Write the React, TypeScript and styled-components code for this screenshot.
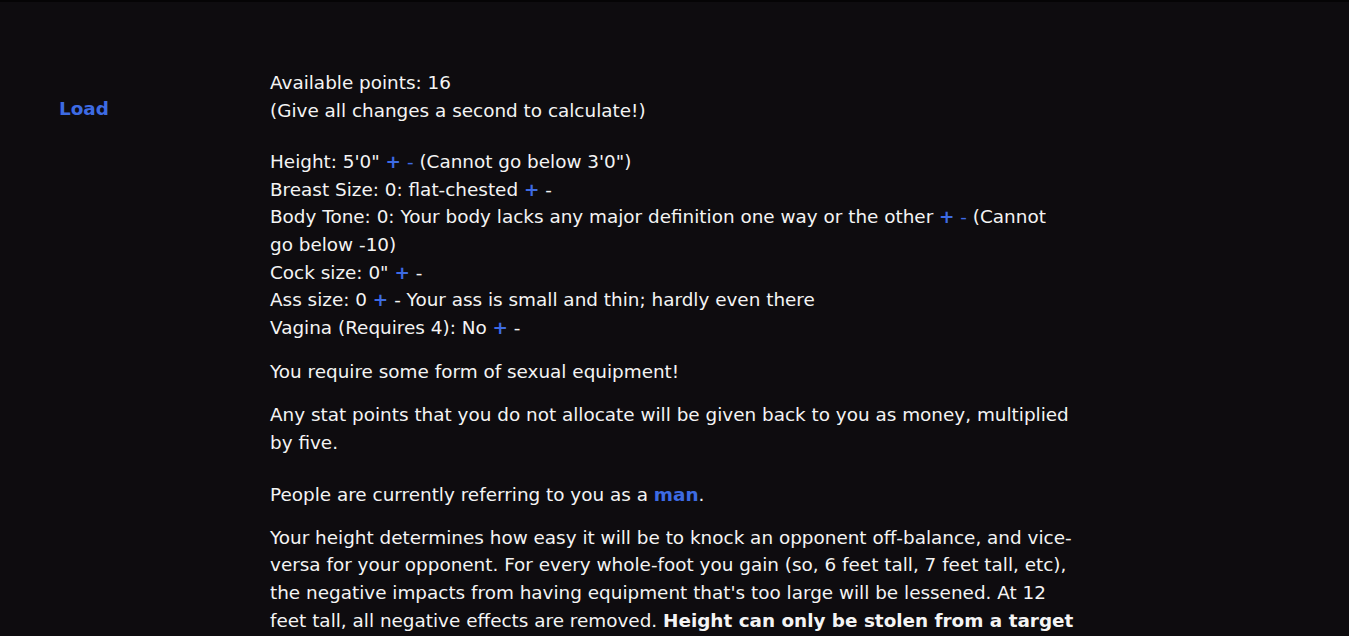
import styled, { createGlobalStyle } from 'styled-components';

const GlobalStyle = createGlobalStyle`
  html, body {
    margin: 0;
    padding: 0;
    background-color: #0e0c0f;
  }
  body {
    font-family: "DejaVu Sans", Verdana, sans-serif;
    font-size: 18.4px;
    color: #f4f4f4;
  }
`;

const Page = styled.div`
  min-height: 636px;
  border-top: 2px solid #050405;
  display: grid;
  grid-template-columns: 270px 804px;
  padding-top: 67px;
  box-sizing: border-box;
`;

const Sidebar = styled.nav`
  padding-left: 59px;
  padding-top: 26px;
  line-height: 27.7px;
`;

const NavLink = styled.a`
  color: #3d6be3;
  font-weight: bold;
  text-decoration: none;
`;

const Main = styled.main`
  line-height: 27.7px;
`;

const Block = styled.p<{ $gap?: number }>`
  margin: 0;
  margin-top: ${(p) => p.$gap ?? 16}px;
`;

const Stepper = styled.a`
  color: #3d6be3;
  text-decoration: none;
  font-weight: bold;
`;

const Minus = styled.a<{ $link?: boolean }>`
  color: ${(p) => (p.$link ? '#3d6be3' : '#f4f4f4')};
  text-decoration: none;
`;

const Strong = styled.strong`
  font-weight: bold;
`;

const Accent = styled.a`
  color: #3d6be3;
  font-weight: bold;
  text-decoration: none;
`;

const Plus = () => <Stepper href="#">+</Stepper>;

export default function App() {
  return (
    <>
      <GlobalStyle />
      <Page>
        <Sidebar>
          <NavLink href="#">Load</NavLink>
        </Sidebar>
        <Main>
          <Block $gap={0}>
            Available points: 16
            <br />
            (Give all changes a second to calculate!)
          </Block>
          <Block $gap={23.4}>
            Height: 5'0" <Plus /> <Minus $link href="#">-</Minus> (Cannot go below 3'0")
            <br />
            Breast Size: 0: flat-chested <Plus /> <Minus href="#">-</Minus>
            <br />
            Body Tone: 0: Your body lacks any major definition one way or the other <Plus />{' '}
            <Minus $link href="#">-</Minus> (Cannot go below -10)
            <br />
            Cock size: 0" <Plus /> <Minus href="#">-</Minus>
            <br />
            Ass size: 0 <Plus /> <Minus href="#">-</Minus> Your ass is small and thin; hardly even there
            <br />
            Vagina (Requires 4): No <Plus /> <Minus href="#">-</Minus>
          </Block>
          <Block>You require some form of sexual equipment!</Block>
          <Block>
            Any stat points that you do not allocate will be given back to you as money, multiplied by five.
          </Block>
          <Block $gap={24}>
            People are currently referring to you as a <Accent href="#">man</Accent>.
          </Block>
          <Block $gap={15}>
            Your height determines how easy it will be to knock an opponent off-balance, and vice-versa for
            your opponent. For every whole-foot you gain (so, 6 feet tall, 7 feet tall, etc), the negative
            impacts from having equipment that's too large will be lessened. At 12 feet tall, all negative
            effects are removed. <Strong>Height can only be stolen from a target</Strong>
          </Block>
        </Main>
      </Page>
    </>
  );
}
